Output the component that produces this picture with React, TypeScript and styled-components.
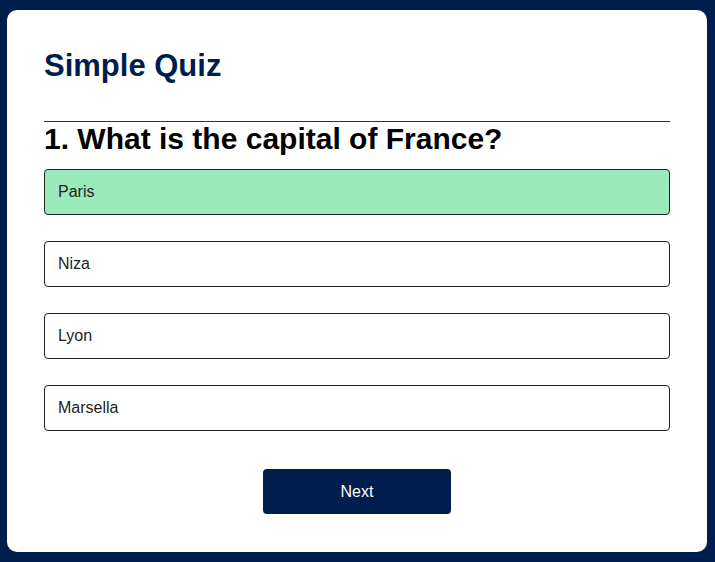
import React from "react";
import styled, { createGlobalStyle } from "styled-components";

const Global = createGlobalStyle`
  * { box-sizing: border-box; }
  html, body { margin: 0; padding: 0; background: #001e4d; }
  body { font-family: "Liberation Sans", Arial, sans-serif; }
`;

const Page = styled.div`
  padding: 10px 0 0 7px;
`;

const Card = styled.div`
  width: 700px;
  background: #ffffff;
  border-radius: 10px;
  padding: 38px 37px 38px;
  display: flex;
  flex-direction: column;
`;

const Title = styled.h1`
  margin: 0;
  font-size: 31px;
  line-height: 36px;
  font-weight: 700;
  color: #001e4d;
  padding-bottom: 37px;
  border-bottom: 1px solid #333333;
`;

const Question = styled.h2`
  margin: 0 0 13px;
  font-size: 30px;
  line-height: 34px;
  font-weight: 700;
  color: #000000;
`;

const Answers = styled.div`
  display: flex;
  flex-direction: column;
  gap: 26px;
`;

const Answer = styled.button<{ $correct?: boolean }>`
  display: block;
  width: 100%;
  height: 46px;
  text-align: left;
  font-family: inherit;
  font-size: 16px;
  line-height: 18px;
  padding: 0 13px;
  color: #222222;
  background: ${(p) => (p.$correct ? "#9aeabc" : "#ffffff")};
  border: 1px solid #222222;
  border-radius: 4px;
  cursor: pointer;
`;

const NextButton = styled.button`
  align-self: center;
  margin-top: 38px;
  width: 188px;
  height: 45px;
  background: #001e4d;
  color: #ffffff;
  font-family: inherit;
  font-size: 16px;
  border: none;
  border-radius: 4px;
  cursor: pointer;
`;

const answers = [
  { text: "Paris", correct: true },
  { text: "Niza", correct: false },
  { text: "Lyon", correct: false },
  { text: "Marsella", correct: false },
];

export default function App() {
  return (
    <Page>
      <Global />
      <Card>
        <Title>Simple Quiz</Title>
        <Question>1. What is the capital of France?</Question>
        <Answers>
          {answers.map((a) => (
            <Answer key={a.text} $correct={a.correct}>
              {a.text}
            </Answer>
          ))}
        </Answers>
        <NextButton>Next</NextButton>
      </Card>
    </Page>
  );
}
